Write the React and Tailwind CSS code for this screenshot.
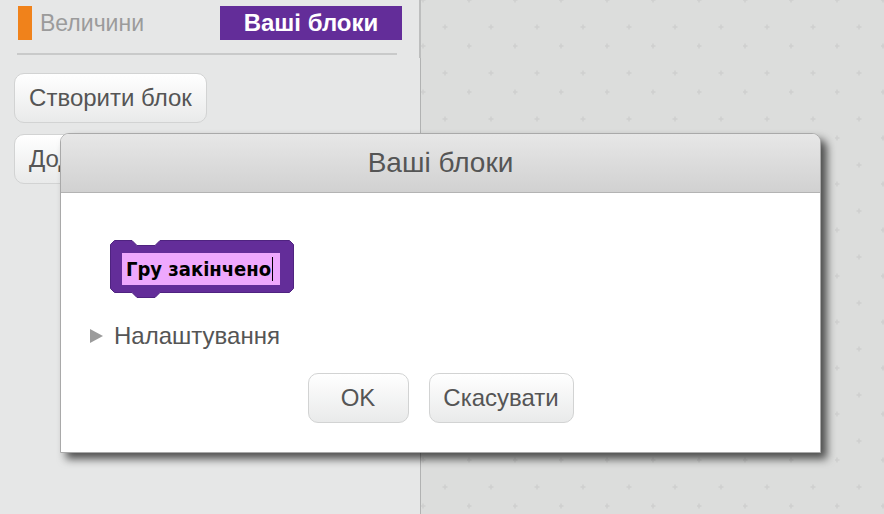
import React from "react";

const font = { fontFamily: '"Liberation Sans", Arial, sans-serif' };

function GridDots() {
  return (
    <svg className="absolute inset-0 h-full w-full" aria-hidden="true">
      <defs>
        <pattern id="plus" x="0" y="0" width="46" height="46" patternUnits="userSpaceOnUse">
          <path d="M2 -2.5v5M-0.5 0h5" stroke="#cfd0cf" strokeWidth="1.5" />
          <path d="M2 43.5v5M-0.5 46h5" stroke="#cfd0cf" strokeWidth="1.5" />
          <path d="M24 24.5v5M21.5 27h5" stroke="#cfd0cf" strokeWidth="1.5" />
        </pattern>
      </defs>
      <rect width="100%" height="100%" fill="url(#plus)" />
    </svg>
  );
}

function Btn({ children, className = "" }) {
  return (
    <div
      className={`flex items-center justify-center rounded-[10px] border border-[#d2d3d3] bg-gradient-to-b from-white to-[#e9eaea] text-[24px] text-[#555] ${className}`}
    >
      {children}
    </div>
  );
}

function CustomBlock() {
  return (
    <div className="relative h-[58px] w-[184px]">
      <svg width="184" height="58" className="absolute inset-0">
        <path
          d="M0.5 4.5L4.5 0.5H22L27 5.5H45L50 0.5H179.5L183.5 4.5V48.5L179.5 52.5H50L45 57.5H27L22 52.5H4.5L0.5 48.5Z"
          fill="#632d99"
          stroke="#4f2380"
          strokeWidth="1"
        />
      </svg>
      <div className="absolute left-[12px] top-[13px] flex h-[32px] w-[158px] items-center bg-[#eea8fd] pl-[4px]">
        <span
          className="text-[20px] font-bold leading-none text-black"
          style={{ fontFamily: '"DejaVu Sans Condensed", "DejaVu Sans", sans-serif' }}
        >
          Гру закінчено
        </span>
        <span className="ml-[1px] h-[24px] w-px bg-black" />
      </div>
    </div>
  );
}

export default function App() {
  return (
    <div className="relative flex h-[514px] w-[884px] overflow-hidden" style={font}>
      {/* palette */}
      <div className="w-[419px] shrink-0 bg-[#e6e7e7]">
        <div className="mt-[6px] flex h-[34px] items-center pl-[18px]">
          <div className="h-[34px] w-[14px] bg-[#f0821b]" />
          <span className="ml-[8px] text-[23px] text-[#9b9b9b]">Величини</span>
          <div className="ml-auto mr-[17px] flex h-[34px] w-[182px] items-center justify-center bg-[#632d99] text-[24px] font-bold text-white">
            Ваші блоки
          </div>
        </div>
        <div className="mx-[17px] mt-[13px] h-[2px] w-[380px] bg-[#c9caca]" />
        <div className="flex flex-col items-start gap-[11px] pl-[14px] pt-[18px]">
          <Btn className="h-[50px] w-[193px]">Створити блок</Btn>
          <Btn className="h-[50px] w-[249px] justify-start pl-[14px]">Додати розширення</Btn>
        </div>
      </div>

      {/* scrollbar / divider */}
      <div className="relative w-[2px] shrink-0 bg-[#e6e7e7]">
        <div className="absolute left-[1px] top-0 h-full w-px bg-[#b1b2b2]" />
        <div className="absolute left-0 top-0 h-[58px] w-[2px] bg-[#bdbebe]" />
      </div>

      {/* scripts area */}
      <div className="relative flex-1 bg-[#dcdddc]">
        <GridDots />
      </div>

      {/* dialog */}
      <div className="absolute left-[60px] top-[133px] flex h-[320px] w-[761px] flex-col overflow-hidden rounded-t-[9px] border border-[#a9a9a9] bg-white shadow-[6px_6px_8px_rgba(0,0,0,0.65)]">
        <div className="flex h-[59px] shrink-0 items-center justify-center border-b border-[#b3b3b3] bg-gradient-to-b from-[#e7e7e7] to-[#d1d1d1] text-[28px] text-[#555]">
          Ваші блоки
        </div>
        <div className="flex flex-1 flex-col">
          <div className="ml-[49px] mt-[47px]">
            <CustomBlock />
          </div>
          <div className="ml-[29px] mt-[20px] flex items-center">
            <svg width="13" height="14" viewBox="0 0 13 14">
              <path d="M0 0L13 7L0 14Z" fill="#9b9b9b" />
            </svg>
            <span className="ml-[11px] text-[24px] text-[#555]">Налаштування</span>
          </div>
          <div className="mt-[19px] flex justify-center gap-[20px]">
            <Btn className="h-[50px] w-[101px]">OK</Btn>
            <Btn className="h-[50px] w-[145px]">Скасувати</Btn>
          </div>
        </div>
      </div>
    </div>
  );
}
